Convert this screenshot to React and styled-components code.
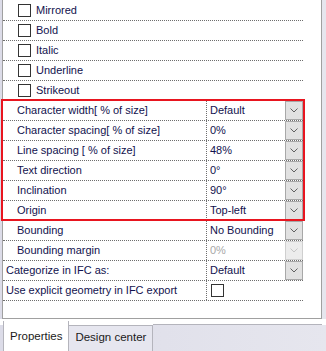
import React from "react";
import styled, { createGlobalStyle } from "styled-components";

const GlobalStyle = createGlobalStyle`
  html, body {
    margin: 0;
    padding: 0;
  }
  body {
    background: #e2e2ec;
    font-family: "Liberation Sans", Arial, sans-serif;
    font-size: 11px;
  }
`;

const checkRows = ["Mirrored", "Bold", "Italic", "Underline", "Strikeout"];

const marked = [
  { name: "Character width[ % of size]", value: "Default" },
  { name: "Character spacing[ % of size]", value: "0%" },
  { name: "Line spacing [ % of size]", value: "48%" },
  { name: "Text direction", value: "0°" },
  { name: "Inclination", value: "90°" },
  { name: "Origin", value: "Top-left" },
];

const Chevron = ({ disabled }) => (
  <svg width="8" height="5" viewBox="0 0 8 5">
    <polyline
      points="0.5,0.5 4,4 7.5,0.5"
      fill="none"
      stroke={disabled ? "#c4c4c4" : "#606060"}
      strokeWidth="1"
    />
  </svg>
);

const App = () => {
  return (
    <Page>
      <GlobalStyle />
      <Panel>
        <Grid>
          {checkRows.map((label) => (
            <Row key={label}>
              <CheckCell>
                <Box />
                <Label>{label}</Label>
              </CheckCell>
            </Row>
          ))}
          <Marked>
            {marked.map((r) => (
              <Row key={r.name}>
                <NameCell $indent={14}>
                  <Label>{r.name}</Label>
                </NameCell>
                <ValueCell>
                  <Value>{r.value}</Value>
                  <DropButton>
                    <Chevron />
                  </DropButton>
                </ValueCell>
              </Row>
            ))}
          </Marked>
          <Row>
            <NameCell $indent={14}>
              <Label>Bounding</Label>
            </NameCell>
            <ValueCell>
              <Value>No Bounding</Value>
              <DropButton>
                <Chevron />
              </DropButton>
            </ValueCell>
          </Row>
          <Row>
            <NameCell $indent={14}>
              <Label>Bounding margin</Label>
            </NameCell>
            <ValueCell>
              <Value $disabled>0%</Value>
              <DropButton $disabled>
                <Chevron disabled />
              </DropButton>
            </ValueCell>
          </Row>
          <Row>
            <NameCell $indent={3}>
              <Label>Categorize in IFC as:</Label>
            </NameCell>
            <ValueCell>
              <Value>Default</Value>
              <DropButton>
                <Chevron />
              </DropButton>
            </ValueCell>
          </Row>
          <Row>
            <NameCell $indent={3}>
              <Label>Use explicit geometry in IFC export</Label>
            </NameCell>
            <ValueCell>
              <ValueBox />
            </ValueCell>
          </Row>
        </Grid>
      </Panel>
      <TabStrip>
        <Tab $active>Properties</Tab>
        <Tab>Design center</Tab>
        <TabFill />
      </TabStrip>
    </Page>
  );
};
export default App;

const Page = styled.div`
  width: 326px;
  height: 351px;
  display: flex;
  flex-direction: column;
  overflow: hidden;
  background: linear-gradient(to right, #dcdce8, #e6e6ee);
`;
const Panel = styled.div`
  margin-left: 2px;
  width: 320px;
  height: 319px;
  box-sizing: border-box;
  background: #fff;
  border: 1px solid #a0a0a0;
  border-top: none;
  padding-top: 1px;
`;
const Grid = styled.div`
  width: 300px;
  display: flex;
  flex-direction: column;
`;
const Marked = styled.div`
  position: relative;
  display: flex;
  flex-direction: column;
  &::after {
    content: "";
    position: absolute;
    top: -2px;
    left: -2px;
    right: -2px;
    bottom: 0;
    border: 2px solid #e8151f;
    pointer-events: none;
  }
`;
const Row = styled.div`
  height: 20px;
  box-sizing: border-box;
  display: flex;
  border-bottom: 1px dotted #6e6e6e;
`;
const CheckCell = styled.div`
  flex: 1;
  display: flex;
  align-items: center;
  gap: 5px;
  padding-left: 14px;
`;
const NameCell = styled.div`
  width: 204px;
  box-sizing: border-box;
  border-right: 1px dotted #6e6e6e;
  display: flex;
  align-items: center;
  padding-left: ${(p) => p.$indent}px;
  overflow: hidden;
  white-space: nowrap;
`;
const Label = styled.span`
  color: #12124e;
  line-height: 19px;
`;
const ValueCell = styled.div`
  flex: 1;
  display: flex;
  align-items: stretch;
  padding-left: 3px;
  overflow: hidden;
`;
const Value = styled.span`
  flex: 1;
  line-height: 19px;
  color: ${(p) => (p.$disabled ? "#a8a8a8" : "#12124e")};
  white-space: nowrap;
`;
const DropButton = styled.div`
  width: 18px;
  box-sizing: border-box;
  border: 1px solid ${(p) => (p.$disabled ? "#cfcfcf" : "#a8a8a8")};
  background: ${(p) => (p.$disabled ? "#ececec" : "#e1e1e1")};
  display: flex;
  align-items: center;
  justify-content: center;
`;
const Box = styled.div`
  width: 13px;
  height: 13px;
  box-sizing: border-box;
  border: 1px solid #333;
  background: #fff;
  margin-left: 1px;
`;
const ValueBox = styled(Box)`
  align-self: center;
  margin-left: 1px;
`;
const TabStrip = styled.div`
  flex: 1;
  display: flex;
  align-items: flex-end;
  padding-left: 3px;
  background: linear-gradient(#fff 0, #fff 6px, transparent 6px);
`;
const Tab = styled.div`
  box-sizing: border-box;
  height: ${(p) => (p.$active ? "30px" : "26px")};
  padding: ${(p) => (p.$active ? "9px 6px 0 6px" : "5px 6px 0 6px")};
  background: ${(p) => (p.$active ? "#fff" : "#e6e6ef")};
  border-left: 1px solid #b4b4bc;
  border-right: 1px solid #b4b4bc;
  border-top: ${(p) => (p.$active ? "none" : "1px solid #b4b4bc")};
  color: #1a1a1a;
  font-size: 11.5px;
  white-space: nowrap;
  & + & {
    border-left: none;
  }
`;
const TabFill = styled.div`
  flex: 1;
  height: 26px;
  border-top: 1px solid #b4b4bc;
  margin-right: 4px;
`;
